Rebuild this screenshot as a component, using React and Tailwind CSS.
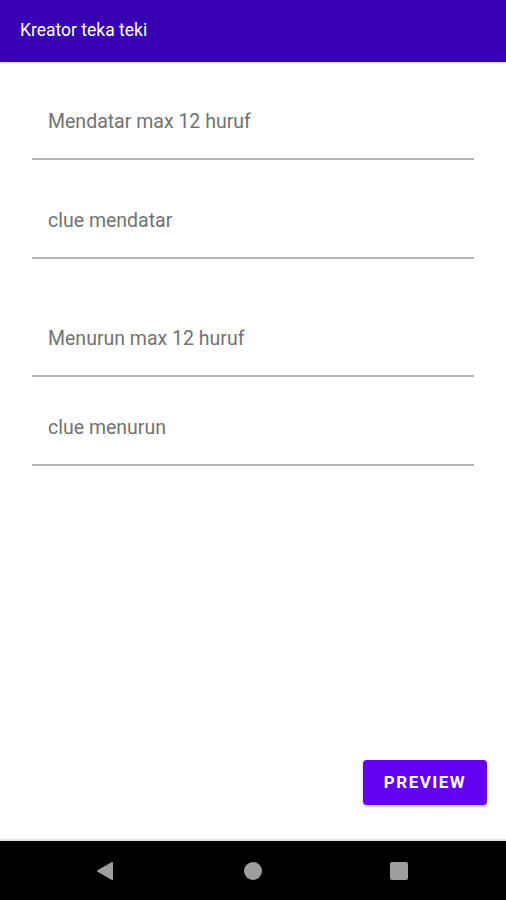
export default function App() {
  const font = { fontFamily: "Roboto, 'Liberation Sans', sans-serif" };
  return (
    <div className="flex h-[900px] w-[506px] flex-col bg-white" style={font}>
      <div className="flex h-[62px] shrink-0 items-center bg-[#3700b3] pl-[20px] pb-[1px] shadow-[0_1px_2px_rgba(0,0,0,0.2)]">
        <span className="text-[17.5px] text-white">Kreator teka teki</span>
      </div>
      <div className="flex flex-1 flex-col px-[32px]">
        <div className="w-[442px] border-b-2 border-[#b4b4b4] pl-[16px] pt-[48px] pb-[24px] text-[19.5px] leading-[24px] text-[#727272]">
          Mendatar max 12 huruf
        </div>
        <div className="w-[442px] border-b-2 border-[#b4b4b4] pl-[16px] pt-[49px] pb-[24px] text-[19.5px] leading-[24px] text-[#727272]">
          clue mendatar
        </div>
        <div className="w-[442px] border-b-2 border-[#b4b4b4] pl-[16px] pt-[68px] pb-[24px] text-[19.5px] leading-[24px] text-[#727272]">
          Menurun max 12 huruf
        </div>
        <div className="w-[442px] border-b-2 border-[#b4b4b4] pl-[16px] pt-[39px] pb-[24px] text-[19.5px] leading-[24px] text-[#727272]">
          clue menurun
        </div>
        <div className="flex-1" />
        <div className="flex justify-end pb-[36px] -mr-[13px]">
          <button className="flex h-[45px] w-[124px] items-center justify-center rounded-[4px] bg-[#6200ee] text-[17px] font-bold tracking-[1.5px] text-white shadow-[0_2px_3px_rgba(0,0,0,0.25)]">
            PREVIEW
          </button>
        </div>
      </div>
      <div className="relative flex h-[59px] shrink-0 items-center bg-black">
        <div className="absolute left-0 right-0 -top-[3px] h-[3px] bg-gradient-to-b from-transparent to-[rgba(0,0,0,0.15)]" />
        <div className="flex w-full items-center">
          <div className="flex w-[212px] justify-end pr-[98px]">
            <svg width="18" height="20" viewBox="0 0 18 20">
              <path d="M16 2 L2 10 L16 18 Z" fill="#9e9e9e" stroke="#9e9e9e" strokeWidth="2" strokeLinejoin="round" />
            </svg>
          </div>
          <div className="flex w-[82px] justify-center">
            <div className="h-[18px] w-[18px] rounded-full bg-[#9e9e9e]" />
          </div>
          <div className="flex flex-1 pl-[96px]">
            <div className="h-[18px] w-[18px] rounded-[2px] bg-[#9e9e9e]" />
          </div>
        </div>
      </div>
    </div>
  );
}
